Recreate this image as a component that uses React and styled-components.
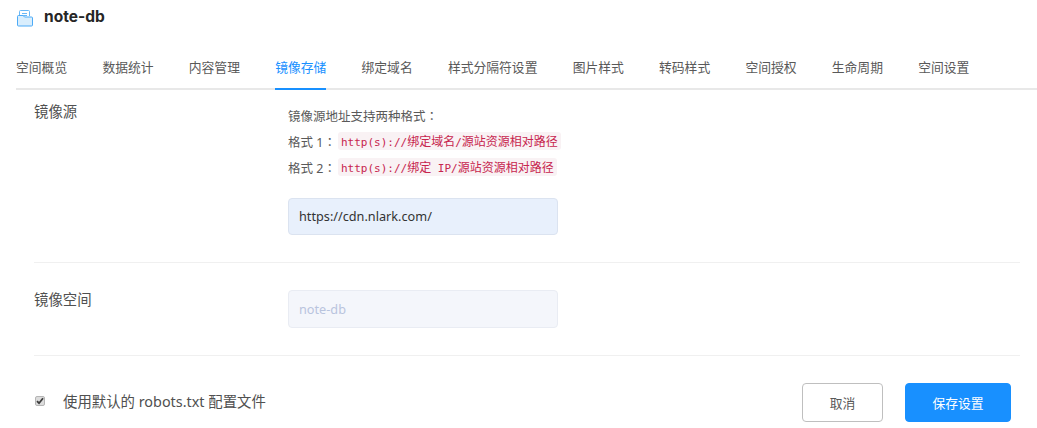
import React from 'react'
import styled, { createGlobalStyle } from 'styled-components'

const cjk = `"Noto Sans", "Noto Sans CJK SC", sans-serif`

const GlobalStyle = createGlobalStyle`
    html, body {
        margin: 0;
        padding: 0;
        background: #fff;
    }
    body {
        font-family: ${cjk};
        color: #595959;
    }
    * {
        box-sizing: border-box;
    }
`

const Page = styled.div`
    width: 1037px;
    height: 428px;
    overflow: hidden;
`
const Header = styled.div`
    display: flex;
    align-items: center;
    height: 36px;
    padding-left: 16px;
    gap: 10px;
`
const Title = styled.h1`
    margin: 0 0 3px;
    font-family: Inter, "Noto Sans", sans-serif;
    font-size: 15.5px;
    line-height: 20px;
    font-weight: 700;
    color: #262626;
`
const Tabs = styled.nav`
    display: flex;
    width: 1021px;
    height: 54px;
    margin-left: 16px;
    padding-top: 22px;
    gap: 35.2px;
    border-bottom: 2px solid #e8e8e8;
`
const Tab = styled.a`
    height: 32px;
    font-size: 12.8px;
    line-height: 18px;
    color: ${p => (p.$active ? '#1890ff' : '#595959')};
    border-bottom: 2px solid ${p => (p.$active ? '#1890ff' : 'transparent')};
`
const Form = styled.div`
    padding: 0 17px 0 34px;
`
const Row = styled.section`
    display: flex;
    padding: ${p => p.$pad};
    border-bottom: 1px solid #f0f0f0;
`
const Label = styled.div`
    width: 254px;
    flex: none;
    font-size: 14.4px;
    line-height: 20px;
    color: #505050;
`
const Hint = styled.div`
    display: flex;
    align-items: center;
    height: 26px;
    font-size: 12.5px;
    color: #595959;
    white-space: pre;
`
const Colon = styled.span`
    font-family: "Noto Sans CJK TC", sans-serif;
`
const Code = styled.code`
    margin-left: 2px;
    padding: 0 3px;
    height: 18px;
    line-height: 18px;
    border-radius: 3px;
    background: #f9f2f4;
    color: #c7254e;
    font-family: "Noto Sans CJK SC", monospace;
    font-size: 12px;
`
const Mono = styled.span`
    font-family: "DejaVu Sans Mono", monospace;
    font-size: 11px;
`
const Field = styled.input`
    display: block;
    width: 270px;
    height: ${p => (p.disabled ? '38px' : '37px')};
    margin-top: ${p => p.$top || 0};
    padding: 0 0 1px 10px;
    border: 1px solid ${p => (p.disabled ? '#e9ecf3' : '#dbe3f0')};
    border-radius: 4px;
    background: ${p => (p.disabled ? '#f4f6fb' : '#e8f0fc')};
    font-family: "Noto Sans", sans-serif;
    font-size: 12.7px;
    color: #333;
    outline: none;
    &:disabled {
        -webkit-text-fill-color: #b9c4de;
        opacity: 1;
    }
`
const Footer = styled.div`
    display: flex;
    align-items: center;
    justify-content: space-between;
    padding: 27px 26px 0 35px;
`
const Check = styled.label`
    display: flex;
    align-items: center;
    gap: 18px;
    margin-top: -2px;
    font-size: 14.4px;
    line-height: 20px;
    color: #505050;
`
const CheckBox = styled.span`
    display: flex;
    align-items: center;
    justify-content: center;
    width: 10px;
    height: 10px;
    margin-top: -2px;
    border: 1px solid #b5b5b5;
    border-radius: 2px;
    background: #dcdcdc;
`
const Actions = styled.div`
    display: flex;
    gap: 22px;
`
const Button = styled.button`
    width: ${p => (p.$primary ? '106px' : '81px')};
    height: 39px;
    border: 1px solid ${p => (p.$primary ? '#1890ff' : '#bfbfbf')};
    border-radius: 4px;
    background: ${p => (p.$primary ? '#1890ff' : '#fff')};
    color: ${p => (p.$primary ? '#fff' : '#595959')};
    font-family: ${cjk};
    font-size: 12.8px;
`

const tabs = ['空间概览', '数据统计', '内容管理', '镜像存储', '绑定域名', '样式分隔符设置', '图片样式', '转码样式', '空间授权', '生命周期', '空间设置']

const BucketIcon = () => (
    <svg width="18" height="18" viewBox="0 0 18 18" fill="none">
        <path d="M3.5 7V2.5a1 1 0 0 1 1-1h8a1 1 0 0 1 1 1V7" fill="#fff" stroke="#69b8f7" />
        <path d="M6 4.5h5M6 6.5h5" stroke="#69b8f7" />
        <path d="M1.5 7.5a1 1 0 0 1 1-1h4.5l1.5 1.5h7a1 1 0 0 1 1 1v7a1 1 0 0 1-1 1h-13a1 1 0 0 1-1-1z" fill="#d9eefd" stroke="#4dabf7" />
    </svg>
)

const CheckMark = () => (
    <svg width="8" height="8" viewBox="0 0 8 8" fill="none">
        <path d="M1 4.2L3 6.2L7 1.2" stroke="#3c3c3c" strokeWidth="1.8" />
    </svg>
)

const App = () => {
    return (
        <Page>
            <GlobalStyle />
            <Header>
                <BucketIcon />
                <Title>note-db</Title>
            </Header>
            <Tabs>
                {tabs.map(t => (
                    <Tab key={t} $active={t === '镜像存储'}>{t}</Tab>
                ))}
            </Tabs>
            <Form>
                <Row $pad="12px 0 27px">
                    <Label>镜像源</Label>
                    <div>
                        <Hint>镜像源地址支持两种格式<Colon>：</Colon></Hint>
                        <Hint>格式 1<Colon>：</Colon><Code><Mono>http(s)://</Mono>绑定域名<Mono>/</Mono>源站资源相对路径</Code></Hint>
                        <Hint>格式 2<Colon>：</Colon><Code><Mono>http(s)://</Mono>绑定<Mono> IP/</Mono>源站资源相对路径</Code></Hint>
                        <Field $top="18px" defaultValue="https://cdn.nlark.com/" />
                    </div>
                </Row>
                <Row $pad="27px 0">
                    <Label>镜像空间</Label>
                    <Field disabled value="note-db" readOnly />
                </Row>
            </Form>
            <Footer>
                <Check>
                    <CheckBox><CheckMark /></CheckBox>
                    使用默认的 robots.txt 配置文件
                </Check>
                <Actions>
                    <Button>取消</Button>
                    <Button $primary>保存设置</Button>
                </Actions>
            </Footer>
        </Page>
    )
}

export default App
